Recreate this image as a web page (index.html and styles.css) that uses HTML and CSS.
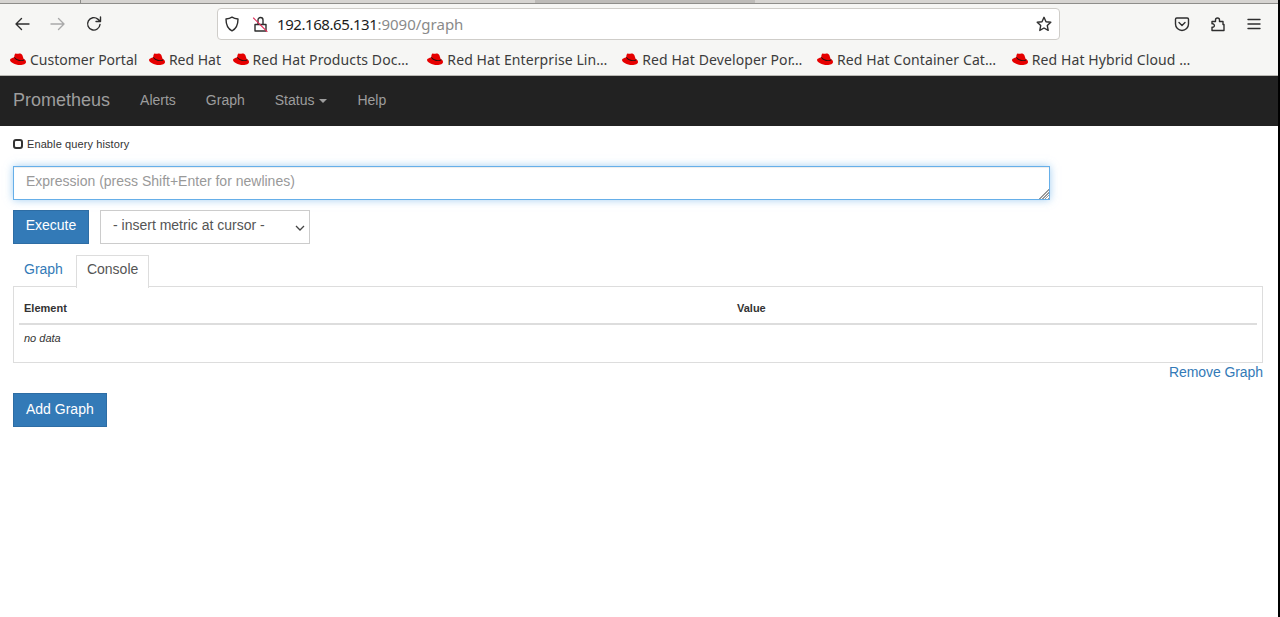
FILE: index.html
```html
<!DOCTYPE html>
<html lang="en">
<head>
<meta charset="utf-8">
<title>Prometheus Time Series Collection and Processing Server</title>
<link rel="stylesheet" href="styles.css">
</head>
<body>
<svg class="defs" width="0" height="0" aria-hidden="true">
  <symbol id="hat" viewBox="0 0 16 16">
    <path fill="#e60000" d="M9.200 2.400c-.7 0-1.100.4-1.800.4-.6 0-1-.3-1.500-.3-.7 0-1.100.6-1.400 1.600L4 7.500l5 2.500 5.200-.5-1.900-5.400c-.4-1-1.300-1.700-3.100-1.700z"/>
    <path fill="#e60000" d="M4.500 6.300C2 7 0 7.700 0 9c0 2.300 5 5 10 5 3.500 0 6-1.200 6-3 0-1.200-.8-2-2-2.900-.2.900-1.300 1.400-3.300 1.300-2.600-.1-5-1.500-6.200-3.100z"/>
    <path fill="#111" d="M4.500 6.100c1.300 1.700 3.700 3 6.200 3.100 1.900.1 3-.4 3.300-1.300l.4.800c-.3 1-1.700 1.500-3.700 1.400-2.800-.1-5.500-1.500-6.600-3.500z"/>
  </symbol>
</svg>
<div class="page">
  <header class="browser">
    <div class="tabstrip"><span class="tab-sep"></span><span class="tab-shadow"></span></div>
    <div class="toolbar">
      <div class="nav-buttons">
        <svg class="icon" viewBox="0 0 16 16"><path d="M15 8H2M7.500 2.500 2 8l5.500 5.500"/></svg>
        <svg class="icon faded" viewBox="0 0 16 16"><path d="M1 8h13M8.500 2.500 14 8l-5.500 5.500"/></svg>
        <svg class="icon" viewBox="0 0 16 16"><path d="M14 8.500A6.200 6.200 0 1 1 11.800 3.100L14 5M14.500 1v4.500H10"/></svg>
      </div>
      <div class="urlbar">
        <svg class="icon shield" viewBox="0 0 16 16"><path d="M8 1.200c2 1.300 4.200 1.700 6 1.800 0 5-1 9.500-6 11.800C3 12.500 2 8 2 3c1.800-.1 4-.5 6-1.800z"/></svg>
        <svg class="icon lock" viewBox="0 0 16 16"><path d="M3 8.500h11V15H3zM6 8.500V4a2.500 2.500 0 0 1 5 0v4.500"/><path class="slash" d="M1.500 2l13.500 13.500"/></svg>
        <span class="url"><span class="url-host">192.168.65.131</span><span class="url-dim">:9090/graph</span></span>
        <svg class="icon star" viewBox="0 0 16 16"><path d="M8 1.300l2 4.400 4.800.6-3.500 3.300.9 4.800L8 12l-4.200 2.400.9-4.800L1.200 6.300 6 5.700z"/></svg>
      </div>
      <div class="tools">
        <svg class="icon" viewBox="0 0 16 16"><path d="M2.800 2h10.400c.7 0 1.300.6 1.300 1.300V8a6.500 6.500 0 0 1-13 0V3.300C1.500 2.600 2.100 2 2.800 2z"/><path d="M5 6.500l3 3 3-3"/></svg>
        <svg class="icon" viewBox="0 0 16 16"><path d="M2 5.500h3.500V4a2 2 0 0 1 4 0v1.500H13v3h1V14.500H2v-3.300h1.200a1.800 1.800 0 0 0 0-3.400H2z"/></svg>
        <svg class="icon" viewBox="0 0 16 16"><path d="M2 3.500h12M2 8h12M2 12.500h12"/></svg>
      </div>
    </div>
    <div class="bookmarks">
      <a class="bookmark"><svg class="hat"><use href="#hat"/></svg><span>Customer Portal</span></a>
      <a class="bookmark"><svg class="hat"><use href="#hat"/></svg><span>Red Hat</span></a>
      <a class="bookmark trunc"><svg class="hat"><use href="#hat"/></svg><span>Red Hat Products Doc…</span></a>
      <a class="bookmark trunc"><svg class="hat"><use href="#hat"/></svg><span>Red Hat Enterprise Lin…</span></a>
      <a class="bookmark trunc"><svg class="hat"><use href="#hat"/></svg><span>Red Hat Developer Por…</span></a>
      <a class="bookmark trunc"><svg class="hat"><use href="#hat"/></svg><span>Red Hat Container Cat…</span></a>
      <a class="bookmark trunc"><svg class="hat"><use href="#hat"/></svg><span>Red Hat Hybrid Cloud …</span></a>
    </div>
  </header>

  <nav class="navbar">
    <a class="brand">Prometheus</a>
    <a class="nav-link">Alerts</a>
    <a class="nav-link">Graph</a>
    <a class="nav-link">Status <span class="caret"></span></a>
    <a class="nav-link">Help</a>
  </nav>

  <main class="content">
    <label class="history"><input class="history-check" type="checkbox"><span>Enable query history</span></label>
    <textarea class="expression" placeholder="Expression (press Shift+Enter for newlines)"></textarea>
    <div class="controls">
      <button class="btn execute" type="button">Execute</button>
      <div class="select-wrap">
        <select class="metric"><option>- insert metric at cursor -</option></select>
        <svg class="chevron" viewBox="0 0 10 6"><path d="M1 1l4 4 4-4"/></svg>
      </div>
    </div>
    <div class="tabs">
      <a class="tab">Graph</a>
      <a class="tab active">Console</a>
    </div>
    <div class="panel">
      <table class="results">
        <thead><tr><th class="col-element">Element</th><th>Value</th></tr></thead>
        <tbody><tr><td colspan="2"><i>no data</i></td></tr></tbody>
      </table>
    </div>
    <div class="remove-row"><a class="remove">Remove Graph</a></div>
    <button class="btn add" type="button">Add Graph</button>
  </main>
</div>
</body>
</html>
```

FILE: styles.css
```css
* { box-sizing: border-box; }
html, body { margin: 0; height: 100%; background: #000; overflow: hidden; }
body { font-family: "Liberation Sans", Arial, sans-serif; font-size: 14px; color: #333; }
.defs { position: absolute; }
.page { width: 1278px; height: 617px; background: #fff; }

.browser { height: 76px; background: #f6f6f4; border-bottom: 1px solid #b9b8b3; font-family: "Noto Sans", sans-serif; }
.tabstrip { height: 4px; background: #d6d4d1; border-bottom: 1px solid #8e8d8a; position: relative; }
.tab-sep { position: absolute; left: 80px; top: 0; width: 1px; height: 3px; background: #8e8d8a; }
.tab-shadow { position: absolute; left: 535px; top: 0; width: 220px; height: 3px; background: #bdbbb8; }

.toolbar { height: 37px; display: flex; align-items: flex-start; padding-top: 4px; }
.icon { width: 16px; height: 16px; fill: none; stroke: #2e2e2e; stroke-width: 1.400; stroke-linejoin: round; stroke-linecap: round; flex: none; }
.nav-buttons { width: 217px; height: 32px; display: flex; align-items: center; gap: 20px; padding-left: 14px; }
.faded { stroke: #a9a9a9; }
.urlbar { width: 843px; height: 32px; background: #fff; border: 1px solid #cfcdc9; border-radius: 4px; display: flex; align-items: center; padding: 0 7px 0 6px; }
.lock { margin-left: 12px; }
.lock .slash { stroke: #e0325c; stroke-width: 1.100; }
.url { margin-left: 9px; font-size: 15px; color: #1c1c1c; flex: 1; }
.url-host { letter-spacing: -.43px; }
.url-dim { color: #8a8a8a; }
.tools { flex: 1; height: 32px; display: flex; align-items: center; gap: 20px; padding-left: 114px; }

.bookmarks { height: 34px; display: flex; align-items: center; gap: 11.500px; padding: 2px 0 0 10px; font-size: 14px; color: #3c3c3c; }
.bookmark { display: flex; align-items: center; gap: 4px; }
.trunc { width: 183.300px; letter-spacing: .1px; }
.hat { width: 16px; height: 16px; flex: none; }

.navbar { height: 50px; background: #222; display: flex; align-items: center; padding-bottom: 2px; color: #9d9d9d; }
.brand { font-size: 18px; padding-left: 13px; margin-right: 15px; }
.nav-link { padding: 0 15px; }
.caret { display: inline-block; width: 0; height: 0; margin-left: 1px; vertical-align: middle; border-top: 4px solid #9d9d9d; border-left: 4px solid transparent; border-right: 4px solid transparent; }

.content { padding: 12px 15px 0 13px; }
.history { display: flex; align-items: center; gap: 4px; height: 12px; margin-bottom: 16px; font-size: 11px; letter-spacing: .1px; }
.history-check { appearance: none; width: 10px; height: 10px; margin: 0; border: 2px solid #333; border-radius: 3px; background: #fff; }
.expression { display: block; width: 1037px; height: 34px; padding: 4px 12px; border: 1px solid #66afe9; border-radius: 0; outline: 0; box-shadow: inset 0 1px 1px rgba(0,0,0,.075), 0 0 8px rgba(102,175,233,.6); font: 14px/20px "Liberation Sans", Arial, sans-serif; color: #555; }
.expression::placeholder { color: #999; opacity: 1; }
.expression::-webkit-resizer { background: linear-gradient(135deg, #fff 62%, transparent 62%), repeating-linear-gradient(135deg, #999 0 1px, #fff 1px 2px); }
.controls { display: flex; gap: 11px; margin-top: 10px; }
.btn { height: 34px; background: #337ab7; border: 1px solid #2e6da4; border-radius: 0; color: #fff; font: 14px/20px "Liberation Sans", Arial, sans-serif; }
.execute { width: 76px; padding: 4px 0 8px; text-align: center; }
.add { display: block; padding: 5px 12px 7px; }
.select-wrap { position: relative; width: 210px; height: 34px; }
.metric { appearance: none; display: block; width: 100%; height: 34px; padding: 3px 12px 7px; border: 1px solid #ccc; border-radius: 0; background: #fff; color: #555; font: 14px/20px "Liberation Sans", Arial, sans-serif; }
.chevron { position: absolute; right: 5px; top: 15px; width: 10px; height: 6px; fill: none; stroke: #444; stroke-width: 1.300; }
.tabs { display: flex; margin-top: 11px; height: 32px; position: relative; z-index: 1; }
.tab { height: 32px; padding: 3px 10px 0; line-height: 20px; color: #337ab7; border: 1px solid transparent; border-bottom: 0; }
.tab.active { color: #555; background: #fff; border-color: #ddd; margin-left: 2px; height: 33px; }
.panel { height: 77px; border: 1px solid #ddd; margin-top: -1px; padding: 0 5px; }
.results { width: 100%; border-collapse: collapse; font-size: 11px; line-height: 16px; }
.results th { text-align: left; padding: 13px 5px 7px; border-bottom: 2px solid #ddd; }
.col-element { width: 713px; }
.results td { padding: 5px 5px; }
.remove-row { display: flex; justify-content: flex-end; height: 30px; line-height: 18px; }
.remove { color: #337ab7; letter-spacing: -.08px; }
```
